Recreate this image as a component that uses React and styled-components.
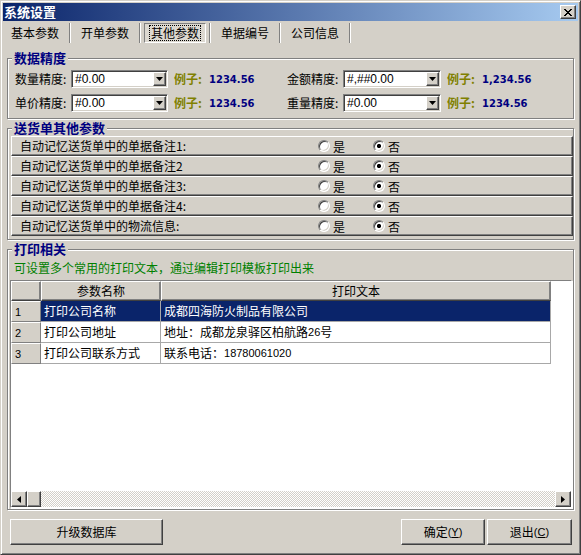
import React from "react";
import styled, { createGlobalStyle } from "styled-components";

const face = "#d4d0c8";
const cjk = `"Noto Sans CJK SC", "Liberation Sans", sans-serif`;
const latin = `"Liberation Sans", Arial, sans-serif`;

const GlobalStyle = createGlobalStyle`
  html, body { margin: 0; padding: 0; background: ${face}; }
  body { font-family: ${cjk}; font-size: 12px; color: #000; }
  * { box-sizing: border-box; }
`;

const raised = `
  border: 1px solid;
  border-color: #fff #404040 #404040 #fff;
  box-shadow: inset -1px -1px #808080, inset 1px 1px ${face};
`;

const sunken = `
  border: 1px solid;
  border-color: #808080 #fff #fff #808080;
  box-shadow: inset 1px 1px #404040, inset -1px -1px ${face};
`;

const Window = styled.div`
  width: 581px;
  height: 555px;
  background: ${face};
  border: 1px solid;
  border-color: ${face} #404040 #404040 ${face};
  box-shadow: inset 1px 1px #fff, inset -1px -1px #808080;
  display: flex;
  flex-direction: column;
  overflow: hidden;
`;

const TitleBar = styled.div`
  margin: 2px 2px 0;
  height: 18px;
  padding: 0 2px 0 1px;
  background: linear-gradient(to right, #0a246a, #a6caf0);
  display: flex;
  align-items: center;
  justify-content: space-between;
`;

const Title = styled.span`
  color: #fff;
  font-weight: bold;
  font-size: 13px;
  line-height: 18px;
`;

const CloseButton = styled.div`
  width: 16px;
  height: 14px;
  background: ${face};
  ${raised}
  display: flex;
  align-items: center;
  justify-content: center;
`;

const TabBar = styled.div`
  height: 23px;
  padding-top: 2px;
  display: flex;
  align-items: flex-start;
`;

const Tab = styled.div`
  width: 68px;
  height: 20px;
  display: flex;
  align-items: stretch;
  padding: 0 ${(p) => (p.$active ? 3 : 0)}px;
`;

const TabFace = styled.div`
  flex: 1;
  display: flex;
  align-items: center;
  justify-content: center;
  line-height: 16px;
  ${(p) =>
    p.$active &&
    `
    border: 1px solid;
    border-color: #808080 #fff #fff #808080;
    background: #dcd8d0;
  `}
`;

const Focus = styled.span`
  padding: 0 1px;
  border: 1px dotted ${(p) => (p.$on ? "#000" : "transparent")};
  line-height: 14px;
`;

const TabSep = styled.div`
  width: 2px;
  height: 20px;
  border-left: 1px solid #808080;
  border-right: 1px solid #fff;
`;

const Page = styled.div`
  flex: 1;
  margin: 0 2px;
  padding: 0 4px;
  display: flex;
  flex-direction: column;
  min-height: 0;
`;

const Group = styled.fieldset`
  margin: ${(p) => p.$mt}px 0 0;
  padding: ${(p) => p.$pad};
  border: 1px solid #808080;
  box-shadow: inset 1px 1px #fff, 1px 1px #fff;
  min-width: 0;
  ${(p) => p.$grow && "flex: 1; display: flex; flex-direction: column; min-height: 0;"}
`;

const Legend = styled.legend`
  margin-left: ${(p) => p.$ml}px;
  padding: 0 2px;
  font-size: 13px;
  font-weight: bold;
  color: #000080;
  line-height: 14px;
  background: ${face};
`;

const FieldRow = styled.div`
  display: flex;
  height: 18px;
  margin-top: ${(p) => p.$mt}px;
`;

const Field = styled.div`
  width: 272px;
  display: flex;
  align-items: center;
`;

const FieldLabel = styled.span`
  width: 56px;
  line-height: 18px;
  white-space: nowrap;
`;

const Combo = styled.div`
  width: ${(p) => p.$w}px;
  height: 18px;
  padding: 1px;
  background: #fff;
  ${sunken}
  display: flex;
  align-items: center;
`;

const ComboText = styled.span`
  flex: 1;
  padding-left: 2px;
  font-family: ${latin};
  font-size: 12px;
  line-height: 14px;
`;

const DropButton = styled.span`
  width: 13px;
  height: 14px;
  background: ${face};
  ${raised}
  display: flex;
  align-items: center;
  justify-content: center;
`;

const ExampleLabel = styled.span`
  margin-left: 6px;
  width: 35px;
  font-weight: bold;
  color: #808000;
  line-height: 18px;
`;

const ExampleValue = styled.span`
  font-family: "DejaVu Sans", sans-serif;
  font-size: 10px;
  font-weight: bold;
  color: #000080;
`;

const OptionRow = styled.div`
  height: 20px;
  ${raised}
  display: flex;
  align-items: center;
  padding-left: 8px;
`;

const OptionLabel = styled.span`
  width: 298px;
  line-height: 18px;
  white-space: nowrap;
`;

const RadioItem = styled.span`
  display: flex;
  align-items: center;
  width: 55px;
  gap: 3px;
`;

const Radio = styled.span`
  width: 12px;
  height: 12px;
  border-radius: 50%;
  border: 1px solid;
  border-color: #808080 #fff #fff #808080;
  box-shadow: inset 1px 1px #404040, inset -1px -1px ${face};
  background: ${(p) =>
    p.$checked ? "radial-gradient(circle, #000 0 1.8px, #fff 2.4px)" : "#fff"};
`;

const Hint = styled.div`
  padding: 4px 0 0 4px;
  line-height: 16px;
  color: #008000;
`;

const Table = styled.div`
  flex: 1;
  margin-top: 4px;
  background: #fff;
  border: 1px solid;
  border-color: #808080 #fff #fff #808080;
  box-shadow: 1px 1px #fff;
  display: flex;
  flex-direction: column;
  min-height: 0;
`;

const Rows = styled.div`
  flex: 1;
`;

const TableRow = styled.div`
  display: grid;
  grid-template-columns: 30px 120px 390px;
  height: ${(p) => (p.$header ? 20 : 21)}px;
`;

const HeadCell = styled.div`
  background: ${face};
  border: 1px solid;
  border-color: #fff #808080 #404040 #fff;
  box-shadow: inset -1px -1px #808080;
  display: flex;
  align-items: center;
  justify-content: center;
  line-height: 16px;
`;

const IndexCell = styled.div`
  background: ${face};
  border-top: 1px solid #fff;
  border-left: 1px solid #fff;
  border-right: 1px solid #808080;
  border-bottom: 1px solid #808080;
  display: flex;
  align-items: center;
  padding-left: 3px;
  font-family: ${latin};
  font-size: 11px;
`;

const Cell = styled.div`
  background: ${(p) => (p.$selected ? "#0a246a" : "#fff")};
  color: ${(p) => (p.$selected ? "#fff" : "#000")};
  border-right: 1px solid #a8a8a8;
  border-bottom: 1px solid #a8a8a8;
  display: flex;
  align-items: center;
  padding-left: 3px;
  line-height: 16px;
  white-space: nowrap;
  overflow: hidden;
`;

const Num = styled.span`
  font-family: ${latin};
  font-size: 11px;
`;

const ScrollBar = styled.div`
  height: 16px;
  display: flex;
  background: repeating-conic-gradient(${face} 0 25%, #fff 0 50%) 0 0 / 2px 2px;
`;

const ScrollButton = styled.div`
  width: ${(p) => p.$w || 16}px;
  height: 16px;
  background: ${face};
  ${raised}
  display: flex;
  align-items: center;
  justify-content: center;
`;

const Track = styled.div`
  flex: 1;
`;

const Footer = styled.div`
  height: 44px;
  padding: 9px 8px 0 9px;
  display: flex;
  align-items: flex-start;
  gap: 2px;
`;

const Button = styled.div`
  width: ${(p) => p.$w}px;
  height: 26px;
  background: ${face};
  ${raised}
  display: flex;
  align-items: center;
  justify-content: center;
  line-height: 16px;
`;

const Spacer = styled.div`
  flex: 1;
`;

const Key = styled.span`
  font-family: ${latin};
  font-size: 11px;
  u { text-decoration: underline; }
`;

const tabs = ["基本参数", "开单参数", "其他参数", "单据编号", "公司信息"];

const options = [
  "自动记忆送货单中的单据备注1:",
  "自动记忆送货单中的单据备注2",
  "自动记忆送货单中的单据备注3:",
  "自动记忆送货单中的单据备注4:",
  "自动记忆送货单中的物流信息:",
];

const Arrow = ({ dir }) => {
  const pts = {
    down: "0,0 7,0 3.5,4",
    left: "4,0 4,7 0,3.5",
    right: "0,0 0,7 4,3.5",
  }[dir];
  const w = dir === "down" ? 7 : 4;
  const h = dir === "down" ? 4 : 7;
  return (
    <svg width={w} height={h} viewBox={`0 0 ${w} ${h}`}>
      <polygon points={pts} fill="#000" />
    </svg>
  );
};

const PrecisionField = ({ label, value, example, comboW }) => (
  <Field>
    <FieldLabel>{label}</FieldLabel>
    <Combo $w={comboW}>
      <ComboText>{value}</ComboText>
      <DropButton>
        <Arrow dir="down" />
      </DropButton>
    </Combo>
    <ExampleLabel>例子:</ExampleLabel>
    <ExampleValue>{example}</ExampleValue>
  </Field>
);

export default function App() {
  return (
    <>
      <GlobalStyle />
      <Window>
        <TitleBar>
          <Title>系统设置</Title>
          <CloseButton>
            <svg width="8" height="7" viewBox="0 0 8 7">
              <path d="M0 0 L7 7 M1 0 L8 7 M7 0 L0 7 M8 0 L1 7" stroke="#000" strokeWidth="1" />
            </svg>
          </CloseButton>
        </TitleBar>

        <TabBar>
          {tabs.map((t, i) => (
            <React.Fragment key={t}>
              <Tab $active={i === 2}>
                <TabFace $active={i === 2}>
                  <Focus $on={i === 2}>{t}</Focus>
                </TabFace>
              </Tab>
              <TabSep />
            </React.Fragment>
          ))}
        </TabBar>

        <Page>
          <Group $mt={7} $pad="5px 0 6px 7px">
            <Legend $ml={-3}>数据精度</Legend>
            <FieldRow $mt={0}>
              <PrecisionField label="数量精度:" value="#0.00" example="1234.56" comboW={97} />
              <PrecisionField label="金额精度:" value="#,##0.00" example="1,234.56" comboW={98} />
            </FieldRow>
            <FieldRow $mt={6}>
              <PrecisionField label="单价精度:" value="#0.00" example="1234.56" comboW={97} />
              <PrecisionField label="重量精度:" value="#0.00" example="1234.56" comboW={98} />
            </FieldRow>
          </Group>

          <Group $mt={2} $pad="1px 0 3px 3px">
            <Legend $ml={1}>送货单其他参数</Legend>
            {options.map((o) => (
              <OptionRow key={o}>
                <OptionLabel>{o}</OptionLabel>
                <RadioItem>
                  <Radio />
                  是
                </RadioItem>
                <RadioItem>
                  <Radio $checked />
                  否
                </RadioItem>
              </OptionRow>
            ))}
          </Group>

          <Group $mt={2} $pad="0 1px 1px 2px" $grow>
            <Legend $ml={2}>打印相关</Legend>
            <Hint>可设置多个常用的打印文本，通过编辑打印模板打印出来</Hint>
            <Table>
              <Rows>
                <TableRow $header>
                  <HeadCell />
                  <HeadCell>参数名称</HeadCell>
                  <HeadCell>打印文本</HeadCell>
                </TableRow>
                <TableRow>
                  <IndexCell>1</IndexCell>
                  <Cell $selected>打印公司名称</Cell>
                  <Cell $selected>成都四海防火制品有限公司</Cell>
                </TableRow>
                <TableRow>
                  <IndexCell>2</IndexCell>
                  <Cell>打印公司地址</Cell>
                  <Cell>
                    地址：成都龙泉驿区柏航路<Num>26</Num>号
                  </Cell>
                </TableRow>
                <TableRow>
                  <IndexCell>3</IndexCell>
                  <Cell>打印公司联系方式</Cell>
                  <Cell>
                    联系电话：<Num>18780061020</Num>
                  </Cell>
                </TableRow>
              </Rows>
              <ScrollBar>
                <ScrollButton>
                  <Arrow dir="left" />
                </ScrollButton>
                <ScrollButton $w={14} />
                <Track />
                <ScrollButton>
                  <Arrow dir="right" />
                </ScrollButton>
              </ScrollBar>
            </Table>
          </Group>
        </Page>

        <Footer>
          <Button $w={153}>升级数据库</Button>
          <Spacer />
          <Button $w={84}>
            确定<Key>(<u>Y</u>)</Key>
          </Button>
          <Button $w={85}>
            退出<Key>(<u>C</u>)</Key>
          </Button>
        </Footer>
      </Window>
    </>
  );
}
